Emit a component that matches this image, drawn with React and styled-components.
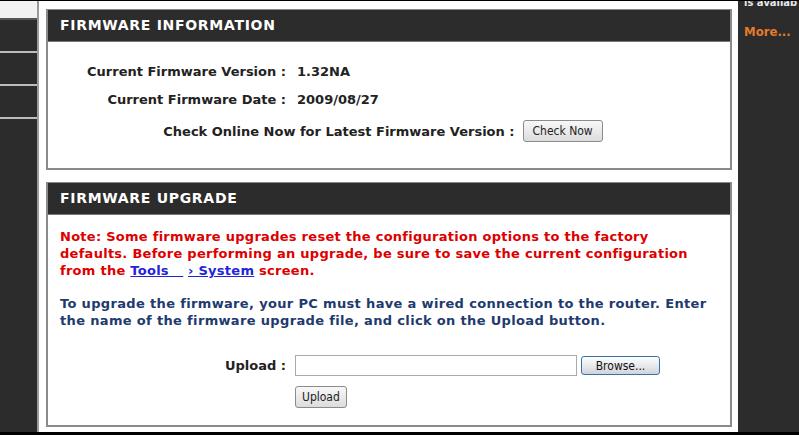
import React from "react";
import styled, { createGlobalStyle } from "styled-components";

const Global = createGlobalStyle`
  html, body {
    margin: 0;
    padding: 0;
    background: #000;
  }
  body {
    font-family: "DejaVu Sans", Verdana, sans-serif;
  }
`;

const Page = styled.div`
  width: 799px;
  height: 435px;
  box-sizing: border-box;
  border-top: 1px solid #000;
  border-bottom: 3px solid #000;
  display: flex;
  overflow: hidden;
  background: #2c2c2c;
`;

const LeftNav = styled.div`
  width: 37px;
  flex-shrink: 0;
  display: flex;
  flex-direction: column;
  background: #2c2c2c;
  border-right: 2px solid #9a9a9a;
`;

const NavTop = styled.div`
  height: 17px;
  background: #f2f2f2;
  border-bottom: 2px solid #555;
`;

const NavItem = styled.div`
  height: 31px;
  border-bottom: 2px solid #bdbdbd;
`;

const Main = styled.div`
  flex: 1;
  min-width: 0;
  background: #fff;
  padding: 8px 6px 5px 7px;
  display: flex;
  flex-direction: column;
  gap: 12px;
`;

const Section = styled.div`
  border: 2px solid #8a8a8a;
  border-top: 1px solid #8a8a8a;
  display: flex;
  flex-direction: column;
  flex: ${(p) => (p.grow ? 1 : "none")};
`;

const Header = styled.div`
  height: 31px;
  background: #2c2c2c;
  color: #fff;
  font-weight: bold;
  font-size: 14px;
  letter-spacing: 0.7px;
  line-height: 31px;
  padding-left: 12px;
  border-bottom: 1px solid #777;
`;

const Body = styled.div`
  padding: ${(p) => p.pad || "0"};
  font-family: "DejaVu Sans", Verdana, sans-serif;
  font-weight: bold;
  font-size: 13px;
`;

const InfoGrid = styled.div`
  display: grid;
  grid-template-columns: 238px 1fr;
  column-gap: 11px;
  row-gap: 13px;
  color: #222;
`;

const Label = styled.div`
  text-align: right;
`;

const CheckRow = styled.div`
  display: flex;
  justify-content: center;
  align-items: center;
  gap: 8px;
  margin-top: 13px;
  color: #222;
  padding-right: 12px;
`;

const Btn = styled.button`
  font-family: "DejaVu Sans Condensed", Tahoma, sans-serif;
  font-size: 12px;
  font-weight: normal;
  color: #222;
  padding: 0 ${(p) => p.px || 8}px;
  height: 22px;
  border: 1px solid #8b8b8b;
  border-radius: 3px;
  background: linear-gradient(#f8f8f8, #dcdcdc);
`;

const BrowseBtn = styled.button`
  font-family: "DejaVu Sans Condensed", Tahoma, sans-serif;
  font-size: 12px;
  color: #111;
  width: 79px;
  height: 19px;
  padding: 0;
  border: 1px solid #3d6fa8;
  border-radius: 3px;
  background: linear-gradient(#fdfdfd, #e3e6ea 60%, #cfd4da);
`;

const Para = styled.p`
  margin: 0 0 16px;
  line-height: 17px;
  white-space: nowrap;
  color: ${(p) => p.color};
  letter-spacing: ${(p) => p.ls || 0}px;
`;

const Link = styled.a`
  color: #2323d8;
  text-decoration: underline;
`;

const UploadGrid = styled.div`
  display: grid;
  grid-template-columns: 238px auto;
  column-gap: 9px;
  row-gap: 10px;
  margin-top: 26px;
  margin-left: -12px;
  color: #222;
  align-items: center;
`;

const FileRow = styled.div`
  display: flex;
  align-items: center;
  gap: 4px;
`;

const FileInput = styled.div`
  width: 280px;
  height: 19px;
  border: 1px solid #aaa;
  background: #fff;
`;

const RightNav = styled.div`
  width: 61px;
  flex-shrink: 0;
  overflow: hidden;
  box-sizing: border-box;
  background: #2c2c2c;
  padding-left: 6px;
  font-family: "DejaVu Sans Condensed", Tahoma, sans-serif;
  font-weight: bold;
`;

const Cut = styled.div`
  color: #e8e8e8;
  font-size: 11px;
  line-height: 11px;
  margin-top: -4px;
  white-space: nowrap;
`;

const More = styled.div`
  color: #e27b2a;
  font-size: 13px;
  margin-top: 16px;
`;

export default function App() {
  return (
    <>
      <Global />
      <Page>
        <LeftNav>
          <NavTop />
          <NavItem />
          <NavItem />
          <NavItem />
        </LeftNav>
        <Main>
          <Section>
            <Header>FIRMWARE INFORMATION</Header>
            <Body pad="22px 0 26px">
              <InfoGrid>
                <Label>Current Firmware Version :</Label>
                <div>1.32NA</div>
                <Label>Current Firmware Date :</Label>
                <div>2009/08/27</div>
              </InfoGrid>
              <CheckRow>
                Check Online Now for Latest Firmware Version :
                <Btn px={9}>Check Now</Btn>
              </CheckRow>
            </Body>
          </Section>
          <Section grow>
            <Header>FIRMWARE UPGRADE</Header>
            <Body pad="13px 12px 0">
              <Para color="#dd0000" ls={0.27}>
                Note: Some firmware upgrades reset the configuration options to the factory
                <br />
                defaults. Before performing an upgrade, be sure to save the current configuration
                <br />
                from the <Link>Tools&nbsp;&nbsp;&nbsp;</Link> <Link>› System</Link> screen.
              </Para>
              <Para color="#1e3a6e" ls={0.34}>
                To upgrade the firmware, your PC must have a wired connection to the router. Enter
                <br />
                the name of the firmware upgrade file, and click on the Upload button.
              </Para>
              <UploadGrid>
                <Label>Upload :</Label>
                <FileRow>
                  <FileInput />
                  <BrowseBtn>Browse...</BrowseBtn>
                </FileRow>
                <div />
                <div>
                  <Btn px={6}>Upload</Btn>
                </div>
              </UploadGrid>
            </Body>
          </Section>
        </Main>
        <RightNav>
          <Cut>is availab</Cut>
          <More>More...</More>
        </RightNav>
      </Page>
    </>
  );
}
